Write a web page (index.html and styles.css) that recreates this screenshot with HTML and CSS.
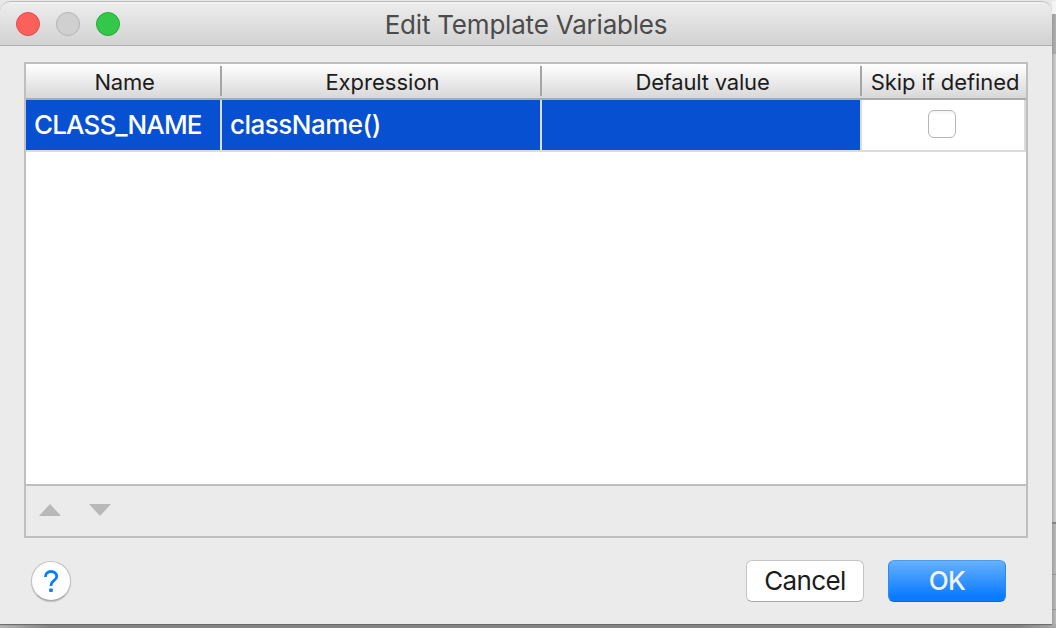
FILE: index.html
```html
<!DOCTYPE html>
<html lang="en">
<head>
<meta charset="utf-8">
<title>Edit Template Variables</title>
<link rel="stylesheet" href="styles.css">
</head>
<body>
<div class="desktop">
  <main class="window">
    <header class="titlebar">
      <div class="lights">
        <span class="light close"></span>
        <span class="light minimize"></span>
        <span class="light zoom"></span>
      </div>
      <h1 class="title"><span>Edit Template Variables</span></h1>
    </header>
    <section class="panel">
      <div class="row head">
        <div class="th"><span class="t-name">Name</span></div>
        <div class="th"><span class="t-expr">Expression</span></div>
        <div class="th"><span class="t-default">Default value</span></div>
        <div class="th"><span class="t-skip">Skip if defined</span></div>
      </div>
      <div class="row body">
        <div class="td selected"><span class="t-class">CLASS_NAME</span></div>
        <div class="td selected"><span class="t-call">className()</span></div>
        <div class="td selected"></div>
        <div class="td check"><span class="checkbox"></span></div>
      </div>
      <div class="empty"></div>
      <div class="toolbar">
        <svg class="arrow" width="22" height="12" viewBox="0 0 22 12"><path d="M0 12 11 0 22 12Z"/></svg>
        <svg class="arrow" width="22" height="12" viewBox="0 0 22 12"><path d="M0 0H22L11 12Z"/></svg>
      </div>
    </section>
    <footer class="footer">
      <button class="help" aria-label="Help"><svg width="16" height="24" viewBox="0 0 16 24"><path d="M2.4 8C2.4 4.4 4.7 2.5 8 2.5S13.7 4.4 13.7 7.4C13.7 11.8 8 11.5 8 16.2V17" fill="none" stroke="#087cff" stroke-width="2.8"/><rect x="6.2" y="19.5" width="3.6" height="3.6" rx=".8" fill="#087cff"/></svg></button>
      <button class="button"><span class="t-cancel">Cancel</span></button>
      <button class="button primary"><span class="t-ok">OK</span></button>
    </footer>
  </main>
  <div class="backdrop"></div>
</div>
</body>
</html>
```
FILE: styles.css
```css
* { box-sizing: border-box; }
body { margin: 0; width: 1056px; height: 628px; overflow: hidden; font-family: Inter, "Liberation Sans", sans-serif; }
.desktop { display: flex; width: 1056px; height: 628px; padding-top: 1px; background: linear-gradient(90deg, #b5b5b5 0, #858585 50px, #858585 1020px, #aaa 1056px) 0 100% / 100% 5px no-repeat, #e8e8e8; }
.window { display: flex; flex-direction: column; width: 1052px; height: 623px; background: #ebebeb; border-radius: 10px 10px 0 0; box-shadow: 0 1px 1px #666; overflow: hidden; }
.backdrop { width: 4px; height: 623px; background:
  linear-gradient(#848484, #848484) 0 521px / 4px 2px no-repeat,
  linear-gradient(#929292, #929292) 0 573px / 4px 1px no-repeat,
  linear-gradient(#929292, #929292) 0 608px / 4px 1px no-repeat,
  linear-gradient(90deg, #8888, #8880) 0 13px / 4px 610px no-repeat,
  linear-gradient(#f4f4f4 0 13px, #b0b0b0 13px 53px, #d2d2d2 53px 521px, #bcbcbc 521px); }
.titlebar { display: grid; grid-template-columns: 120px 1fr 120px; align-items: center; height: 45px; flex: none; border-top: 1px solid #bababa; border-bottom: 1px solid #aeaeae; border-radius: 10px 10px 0 0; background: linear-gradient(#f6f6f6 0, #ececec 2px, #d2d2d2 100%); }
.lights { display: flex; gap: 16px; padding-left: 16px; }
.light { width: 24px; height: 24px; border-radius: 50%; border: 1px solid; }
.close { background: #fc605c; border-color: #e24b48; }
.minimize { background: #d0d0d0; border-color: #b4b4b4; }
.zoom { background: #34c84a; border-color: #25ab35; }
.title { margin: 0; padding-top: 2px; font-size: 26px; line-height: 32px; font-weight: 400; color: #4b4b4b; text-align: center; white-space: nowrap; letter-spacing: -.2px; }
.panel { display: flex; flex-direction: column; margin: 16px 24px 0; height: 476px; border: 2px solid #bfbfbf; background: #fff; }
.row { display: grid; grid-template-columns: 196px 320px 320px 164px; }
.head { height: 36px; border-bottom: 2px solid #ababab; background: linear-gradient(#fff, #d8d8d8); }
.th { display: flex; align-items: center; justify-content: center; margin: 2px 0; padding: 2px 0 0 3px; border-right: 2px solid #a5a5a5; font-size: 22px; color: #1c1c1c; white-space: nowrap; }
.th:last-child { border-right: 0; padding-left: 2px; }
.t-name { letter-spacing: -.2px; }
.t-default { letter-spacing: -.2px; }
.t-skip { letter-spacing: -.08px; }
.body { height: 52px; }
.td { display: flex; align-items: center; padding: 0 0 2px 8px; border-right: 2px solid #dcdcdc; border-bottom: 2px solid #dcdcdc; font-size: 26px; font-weight: 500; color: #fff; white-space: nowrap; }
.t-class { letter-spacing: -.85px; }
.t-call { letter-spacing: -.5px; }
.selected { background: #0850d2; background-clip: padding-box; }
.check { justify-content: center; padding: 0 2px 2px 0; }
.checkbox { width: 28px; height: 28px; border: 1px solid #b5b5b5; border-radius: 6px; background: linear-gradient(#f4f4f4, #fff 4px); }
.empty { flex: 1; }
.toolbar { display: flex; gap: 28px; height: 52px; padding: 18px 0 0 13px; border-top: 2px solid #bfbfbf; background: #ebebeb; }
.arrow { fill: #b8b8b8; }
.footer { display: flex; align-items: flex-start; padding: 22px 46px 0 31px; }
.help, .button { display: flex; align-items: center; justify-content: center; padding: 0; font: inherit; }
.help { width: 40px; height: 40px; margin: 1px auto 0 0; border: 1px solid #c2c2c2; border-bottom-color: #aaa; border-radius: 50%; background: #fff; box-shadow: 0 1px 1px #0003; }
.button { width: 118px; height: 42px; padding-bottom: 2px; border: 1px solid #c4c4c4; border-bottom-color: #a9a9a9; border-radius: 6px; background: #fff; color: #1c1c1c; font-size: 26px; letter-spacing: -.6px; white-space: nowrap; }
.primary { margin-left: 24px; border-color: #4a9cf5 #2989f5 #0a67f4; background: linear-gradient(#66b1fd, #097bff 90%); color: #f2f2f2; font-weight: 500; }
```
